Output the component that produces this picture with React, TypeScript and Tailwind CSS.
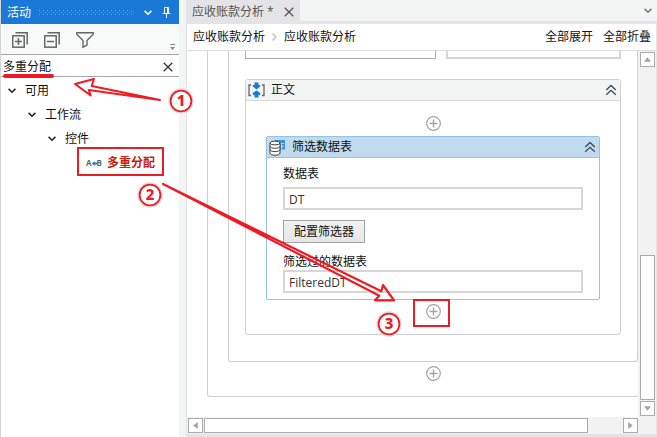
import { useState } from "react";
import type { ReactNode } from "react";

function ChevronDown({ className }: { className?: string }) {
  return (
    <svg viewBox="0 0 8 6" className={`h-[6px] w-2 ${className ?? ""}`} fill="none" stroke="currentColor" strokeWidth="1.5">
      <path d="M0.6 0.9 4 4.3 7.4 0.9" />
    </svg>
  );
}

function CloseIcon({ className }: { className?: string }) {
  return (
    <svg viewBox="0 0 10 10" className={className} fill="none" stroke="currentColor" strokeWidth="1.3">
      <path d="M0.7 0.7 9.3 9.3M9.3 0.7 0.7 9.3" />
    </svg>
  );
}

function DoubleChevronUp() {
  return (
    <svg viewBox="0 0 12 12" className="size-3 text-[#3b4a5a]" fill="none" stroke="currentColor" strokeWidth="1.3">
      <path d="M1.2 6 6 1.5 10.8 6M1.2 10.8 6 6.3 10.8 10.8" />
    </svg>
  );
}

function StackIcon({ plus }: { plus?: boolean }) {
  return (
    <svg viewBox="0 0 16 16" className="size-4" fill="none" stroke="#666" strokeWidth="1.5">
      <path d="M3.5 0.8H15.2V12.5" />
      <rect x="0.8" y="3.8" width="11.4" height="11.4" />
      <path d="M3 9.5H10" />
      {plus && <path d="M6.5 6V13" />}
    </svg>
  );
}

function FilterIcon() {
  return (
    <svg viewBox="0 0 18 16" className="h-4 w-[18px]" fill="none" stroke="#666" strokeWidth="1.4">
      <path d="M0.8 0.8H17.2V2.2L11 8.5V13L7 15.2V8.5L0.8 2.2Z" />
    </svg>
  );
}

function SequenceIcon() {
  return (
    <svg viewBox="0 0 17 16" className="h-4 w-[17px]" fill="none">
      <path d="M3 3H1V13.5H3M14 3H16V13.5H14" stroke="#666" strokeWidth="1.3" />
      <path d="M6.5 0.5H10.5V3H12.2V4.5L8.5 7.5 4.8 4.5V3H6.5Z" fill="#1a78d6" />
      <path d="M8.5 8.4 12.2 11V13H10.5V15.5H6.5V13H4.8V11Z" fill="#1a78d6" />
    </svg>
  );
}

function DatabaseIcon() {
  return (
    <svg viewBox="0 0 17 17" className="size-[17px]" fill="none">
      <path d="M6 1H16V10.5H6Z" fill="#3c92d2" />
      <path d="M8 4.5H15M8 7.5H15M9.5 4V10M12.5 4V10" stroke="#c1dbee" />
      <path d="M1 4V14C1 17 11 17 11 14V4" fill="#fff" stroke="#3f3f3f" />
      <ellipse cx="6" cy="4" rx="5" ry="1.9" fill="#fff" stroke="#3f3f3f" />
      <path d="M1 7.3C1 9.9 11 9.9 11 7.3M1 10.6C1 13.2 11 13.2 11 10.6" stroke="#3f3f3f" />
    </svg>
  );
}

function AddButton() {
  return (
    <button type="button" aria-label="+" className="mx-auto block size-[15px]">
      <svg viewBox="0 0 15 15" className="size-[15px]" fill="none" stroke="#a3a3a3" strokeWidth="1.2">
        <circle cx="7.5" cy="7.5" r="6.8" />
        <path d="M3.5 7.5H11.5M7.5 3.5V11.5" strokeWidth="1.4" />
      </svg>
    </button>
  );
}

function ScrollButton({ d }: { d: string }) {
  return (
    <button type="button" className="grid size-[15px] shrink-0 place-items-center border border-[#ababab] bg-white">
      <svg viewBox="0 0 6 6" className="size-[7px]" fill="#a3a3a3">
        <path d={d} />
      </svg>
    </button>
  );
}

function TreeRow({ indent, children }: { indent: string; children: ReactNode }) {
  return (
    <li className={`flex h-6 items-center gap-[9px] ${indent}`}>
      <ChevronDown className="text-[#222]" />
      <span>{children}</span>
    </li>
  );
}

function Sidebar() {
  const [query, setQuery] = useState("多重分配");

  return (
    <aside className="flex w-[179px] shrink-0 flex-col border-l border-[#d5d5d5] bg-white">
      <header className="flex h-6 shrink-0 items-center bg-[#1a78d6] pt-px pr-2 pl-[6px] text-white">
        <h2>活动</h2>
        <svg className="ml-2 h-[5px] flex-1" aria-hidden="true">
          <defs>
            <pattern id="grip" width="4" height="4" patternUnits="userSpaceOnUse">
              <rect width="1" height="1" fill="#6aa8e4" />
              <rect x="2" y="2" width="1" height="1" fill="#6aa8e4" />
            </pattern>
          </defs>
          <rect width="100%" height="5" fill="url(#grip)" />
        </svg>
        <ChevronDown className="mr-[10px] ml-[10px]" />
        <svg viewBox="0 0 9 11" className="h-[11px] w-[9px]" fill="none" stroke="currentColor">
          <path d="M2.5 6.5V0.5H6.5V6.5M5.5 0.5V6.5M0.5 6.5H8.5M4.5 6.5V11" />
        </svg>
      </header>
      <div className="flex h-[31px] shrink-0 items-center gap-4 border-b border-[#a6a6a6] bg-[#f8f9f9] pt-px pr-1 pl-[11px]">
        <button type="button"><StackIcon plus /></button>
        <button type="button"><StackIcon /></button>
        <button type="button"><FilterIcon /></button>
        <svg viewBox="0 0 5 6" className="mb-1 ml-auto h-[6px] w-[5px] self-end" fill="#8a8a8a">
          <path d="M0 0H5V1H0ZM0 3H5L2.5 6Z" />
        </svg>
      </div>
      <div className="flex h-[22px] shrink-0 items-center border-b border-[#a6a6a6] pt-[2px] pr-[6px] pl-[2px]">
        <input
          aria-label="活动"
          value={query}
          onChange={(e) => setQuery(e.target.value)}
          className="min-w-0 flex-1 outline-none"
        />
        <button type="button" onClick={() => setQuery("")}>
          <CloseIcon className="size-[10px] text-[#333]" />
        </button>
      </div>
      <ul className="pt-[2px]">
        <TreeRow indent="pl-[7px]">可用</TreeRow>
        <TreeRow indent="pl-[27px]">工作流</TreeRow>
        <TreeRow indent="pl-[47px]">控件</TreeRow>
        <li className="flex h-6 items-center gap-[5px] pl-[85px]">
          <span className="flex w-4 items-center text-[8px] font-bold text-[#666]">
            A
            <svg viewBox="0 0 5 5" className="size-[5px] shrink-0" fill="#1a78d6">
              <path d="M0 2.5 2.5 0V1.5H5V3.5H2.5V5Z" />
            </svg>
            B
          </span>
          <span className="font-bold text-[#c5200f]">多重分配</span>
        </li>
      </ul>
    </aside>
  );
}

interface FieldProps {
  label: string;
  value: string;
  gap?: string;
}

function Field({ label, value, gap = "gap-0" }: FieldProps) {
  const [text, setText] = useState(value);

  return (
    <label className={`flex flex-col ${gap}`}>
      <span className="leading-4">{label}</span>
      <input
        value={text}
        onChange={(e) => setText(e.target.value)}
        className="h-[23px] w-full border-2 border-[#d6d6d6] bg-white px-1 pt-[2px] text-[#333] outline-none"
      />
    </label>
  );
}

function FilterActivity() {
  return (
    <section className="mt-[5px] mb-1 rounded-[2px] border border-[#97c3e0] bg-white">
      <header className="flex h-[21px] items-center border-b border-[#97c3e0] bg-[#c1dbee] pr-[3px] pl-[2px]">
        <DatabaseIcon />
        <h3 className="ml-[6px] flex-1">筛选数据表</h3>
        <button type="button"><DoubleChevronUp /></button>
      </header>
      <div className="px-4 pt-2 pb-[6px]">
        <Field label="数据表" value="DT" gap="gap-[5px]" />
        <button type="button" className="mt-[10px] mb-[11px] block h-[23px] border border-[#a3a3a3] bg-linear-to-b from-[#f2f2f2] to-[#e6e6e6] px-[10px]">
          配置筛选器
        </button>
        <Field label="筛选过的数据表" value="FilteredDT" />
      </div>
    </section>
  );
}

function Canvas() {
  return (
    <div className="min-w-0 flex-1 overflow-hidden bg-white">
      <div className="ml-5 rounded-bl-[3px] border-b border-l border-[#d0d0d0] pb-[15px]">
        <div className="mb-1 ml-5 rounded-b-[3px] border border-t-0 border-[#d0d0d0] px-4 pb-[26px]">
          <div className="flex h-2 gap-[10px]">
            <div className="w-[191px] border border-t-0 border-[#ababab]" />
            <div className="flex-1 border-2 border-t-0 border-[#d6d6d6]" />
          </div>
          <section className="mt-5 rounded-[3px] border border-[#d0d0d0]">
            <header className="flex h-[21px] items-center border-b border-[#d6d6d6] bg-[#f3f5f5] pr-[3px] pl-[2px]">
              <SequenceIcon />
              <h2 className="ml-[6px] flex-1">正文</h2>
              <button type="button"><DoubleChevronUp /></button>
            </header>
            <div className="px-5 py-[15px]">
              <AddButton />
              <FilterActivity />
              <AddButton />
            </div>
          </section>
        </div>
        <div className="pl-5">
          <AddButton />
        </div>
      </div>
    </div>
  );
}

function Workspace() {
  return (
    <main className="ml-[7px] flex min-w-0 flex-1 flex-col">
      <div className="flex h-[21px] shrink-0 items-center pr-[5px]">
        <div className="flex h-full items-center bg-[#e4e4e6] px-[6px] pt-[2px] text-[#555]">
          <span>应收账款分析 *</span>
          <button type="button" className="ml-[10px]">
            <CloseIcon className="size-[10px]" />
          </button>
        </div>
        <ChevronDown className="ml-auto text-[#777]" />
      </div>
      <div className="flex min-h-0 flex-1 flex-col border-x border-t-3 border-b-3 border-[#e4e4e6]">
        <nav className="flex h-[27px] shrink-0 items-center border-b border-[#dcdcdc] bg-white pr-[5px] pl-[6px]">
          <a href="#root">应收账款分析</a>
          <svg viewBox="0 0 7 8" className="mx-[6px] h-2 w-[7px]" fill="none" stroke="#ccc" strokeWidth="1.8">
            <path d="M1.5 0.5 5 4 1.5 7.5" />
          </svg>
          <a href="#current">应收账款分析</a>
          <button type="button" className="ml-auto">全部展开</button>
          <button type="button" className="ml-[10px]">全部折叠</button>
        </nav>
        <div className="flex min-h-0 flex-1">
          <Canvas />
          <div className="flex w-[18px] shrink-0 flex-col items-end gap-[1px] bg-[#f2f2f2] pt-[1px] pr-[1px] pb-[1px]">
            <ScrollButton d="M0 5 3 1 6 5Z" />
            <div className="flex-[188]" />
            <div className="w-[15px] flex-[145] border border-[#ababab] bg-white" />
            <ScrollButton d="M0 1H6L3 5Z" />
          </div>
        </div>
        <div className="flex h-[17px] shrink-0 items-center gap-[1px] bg-[#f2f2f2] pr-[18px] pl-[1px]">
          <ScrollButton d="M5 0V6L1 3Z" />
          <div className="h-[15px] flex-[384] border border-[#ababab] bg-white" />
          <div className="flex-[33]" />
          <ScrollButton d="M1 0 5 3 1 6Z" />
        </div>
      </div>
    </main>
  );
}

const STEPS = [
  { n: 1, x: 181, y: 101 },
  { n: 2, x: 150, y: 195 },
  { n: 3, x: 389, y: 324 },
];

function Annotations() {
  return (
    <svg className="pointer-events-none absolute inset-0 size-full" fill="none" stroke="#ed1c24">
      <path d="M5 76H52" strokeWidth="4" strokeLinecap="round" />
      <path d="M75 84 94 79 91.7 86 160 100 88.7 90 90.7 95.5Z" strokeWidth="2" strokeLinejoin="round" />
      <path d="M163 184 381.3 291.3 383 285 394 300.3 375 300.3 379.3 295.7Z" strokeWidth="2.2" strokeLinejoin="round" />
      <rect x="78" y="148" width="85" height="27" strokeWidth="2" />
      <rect x="414" y="300" width="35" height="26" strokeWidth="2" />
      {STEPS.map(({ n, x, y }) => (
        <g key={n}>
          <circle cx={x} cy={y} r="12" fill="#fff" stroke="#dcdcdc" strokeWidth="1.4" />
          <circle cx={x} cy={y} r="10.4" strokeWidth="1.8" />
          <text
            x={x}
            y={y + 5}
            textAnchor="middle"
            fill="#ed1c24"
            stroke="none"
            className="font-['Noto_Sans',sans-serif] text-[15px] font-extrabold"
          >
            {n}
          </text>
        </g>
      ))}
    </svg>
  );
}

export default function App() {
  return (
    <div className='relative flex h-screen overflow-hidden bg-[#f3f5f5] font-["Open_Sans","Noto_Sans_CJK_SC",sans-serif] text-xs text-[#111]'>
      <Sidebar />
      <Workspace />
      <Annotations />
    </div>
  );
}
